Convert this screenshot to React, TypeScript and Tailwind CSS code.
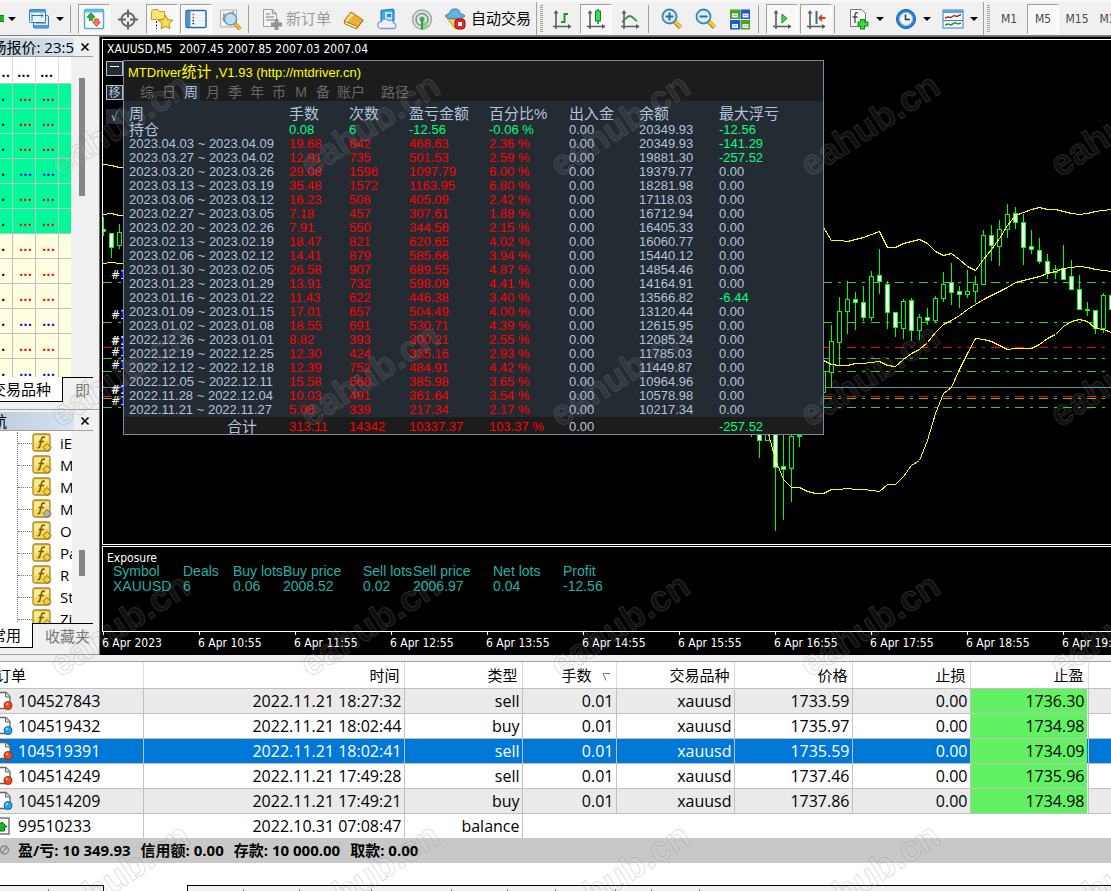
import { Fragment, type ReactNode } from "react"

type Candle = [x: number, high: number, low: number, top: number, bottom: number, up: boolean]

const candles: Candle[] = [
    [103, 217, 235, 229, 231, false],
    [111, 233, 257, 233, 247, false],
    [119, 224, 248, 232, 245, true],
    [751, 430, 436, 430, 434, false],
    [759, 430, 457, 430, 440, false],
    [767, 430, 440, 430, 440, true],
    [775, 430, 530, 430, 467, false],
    [783, 430, 519, 466, 469, false],
    [791, 430, 501, 436, 468, true],
    [799, 430, 446, 435, 435, true],
    [823, 371, 392, 371, 392, true],
    [831, 325, 387, 341, 372, true],
    [839, 297, 365, 311, 342, true],
    [847, 281, 333, 299, 311, true],
    [855, 292, 329, 299, 302, false],
    [863, 286, 320, 302, 317, false],
    [871, 271, 320, 276, 317, true],
    [879, 249, 293, 275, 281, false],
    [887, 281, 328, 284, 312, false],
    [895, 312, 336, 312, 327, false],
    [903, 299, 338, 301, 328, true],
    [911, 298, 340, 300, 330, false],
    [919, 314, 339, 317, 330, true],
    [927, 308, 324, 317, 320, false],
    [935, 296, 322, 298, 320, true],
    [943, 272, 301, 284, 298, true],
    [951, 263, 304, 282, 292, false],
    [959, 286, 307, 291, 294, false],
    [967, 270, 297, 291, 294, true],
    [975, 276, 302, 284, 291, true],
    [983, 230, 284, 235, 284, true],
    [991, 225, 260, 235, 245, false],
    [999, 220, 265, 229, 246, true],
    [1007, 204, 237, 214, 229, true],
    [1015, 207, 228, 213, 222, false],
    [1023, 214, 264, 222, 247, false],
    [1031, 230, 253, 246, 249, false],
    [1039, 238, 263, 250, 261, false],
    [1047, 254, 278, 261, 273, false],
    [1055, 265, 278, 269, 272, true],
    [1063, 245, 279, 268, 279, false],
    [1071, 260, 289, 276, 289, false],
    [1079, 275, 309, 289, 309, false],
    [1087, 302, 315, 309, 310, false],
    [1095, 310, 333, 310, 328, false],
    [1103, 293, 332, 295, 328, true],
    [1111, 295, 309, 295, 309, false],
]

const bands = [
    { start: 823, ys: [227, 240, 240, 241, 239, 237, 234, 231, 247, 247, 243, 241, 239, 243, 251, 255, 253, 259, 266, 270, 259, 249, 238, 225, 215, 212, 209, 207, 209, 209, 211, 213, 214, 213, 211, 210, 209] },
    { start: 823, ys: [360, 364, 365, 365, 363, 363, 362, 361, 365, 366, 359, 353, 349, 342, 332, 324, 320, 315, 309, 304, 299, 295, 291, 287, 282, 280, 278, 276, 273, 271, 268, 267, 266, 267, 269, 270, 271] },
    { start: 767, ys: [430, 459, 479, 487, 487, 491, 493, 493, 489, 489, 488, 489, 489, 490, 491, 484, 484, 476, 465, 460, 440, 413, 393, 387, 369, 353, 338, 339, 341, 345, 349, 348, 348, 348, 344, 338, 334, 326, 321, 319, 321, 328, 329, 332] },
    { start: 103, ys: [164, 165, 167, 167] },
    { start: 103, ys: [214, 213, 215, 215] },
    { start: 103, ys: [263, 262, 263, 263] },
]

const orderLines = [
    { y: 282, color: "#32cd32" },
    { y: 322, color: "#32cd32" },
    { y: 347, color: "#ff0000" },
    { y: 358, color: "#32cd32" },
    { y: 371, color: "#32cd32" },
    { y: 396, color: "#ff0000" },
    { y: 398, color: "#32cd32" },
    { y: 407, color: "#32cd32" },
]

const statRows = [
    ["2023.04.03 ~ 2023.04.09", "19.68", "642", "468.63", "2.36 %", "20349.93", "-141.29"],
    ["2023.03.27 ~ 2023.04.02", "12.91", "735", "501.53", "2.59 %", "19881.30", "-257.52"],
    ["2023.03.20 ~ 2023.03.26", "29.08", "1596", "1097.79", "6.00 %", "19379.77", "0.00"],
    ["2023.03.13 ~ 2023.03.19", "35.48", "1572", "1163.95", "6.80 %", "18281.98", "0.00"],
    ["2023.03.06 ~ 2023.03.12", "16.23", "508", "405.09", "2.42 %", "17118.03", "0.00"],
    ["2023.02.27 ~ 2023.03.05", "7.18", "457", "307.61", "1.88 %", "16712.94", "0.00"],
    ["2023.02.20 ~ 2023.02.26", "7.91", "550", "344.56", "2.15 %", "16405.33", "0.00"],
    ["2023.02.13 ~ 2023.02.19", "18.47", "821", "620.65", "4.02 %", "16060.77", "0.00"],
    ["2023.02.06 ~ 2023.02.12", "14.41", "879", "585.66", "3.94 %", "15440.12", "0.00"],
    ["2023.01.30 ~ 2023.02.05", "26.58", "907", "689.55", "4.87 %", "14854.46", "0.00"],
    ["2023.01.23 ~ 2023.01.29", "13.91", "732", "598.09", "4.41 %", "14164.91", "0.00"],
    ["2023.01.16 ~ 2023.01.22", "11.43", "622", "446.38", "3.40 %", "13566.82", "-6.44"],
    ["2023.01.09 ~ 2023.01.15", "17.01", "657", "504.49", "4.00 %", "13120.44", "0.00"],
    ["2023.01.02 ~ 2023.01.08", "18.55", "691", "530.71", "4.39 %", "12615.95", "0.00"],
    ["2022.12.26 ~ 2023.01.01", "8.82", "393", "300.21", "2.55 %", "12085.24", "0.00"],
    ["2022.12.19 ~ 2022.12.25", "12.30", "424", "335.16", "2.93 %", "11785.03", "0.00"],
    ["2022.12.12 ~ 2022.12.18", "12.39", "752", "484.91", "4.42 %", "11449.87", "0.00"],
    ["2022.12.05 ~ 2022.12.11", "15.58", "568", "385.98", "3.65 %", "10964.96", "0.00"],
    ["2022.11.28 ~ 2022.12.04", "10.03", "491", "361.64", "3.54 %", "10578.98", "0.00"],
    ["2022.11.21 ~ 2022.11.27", "5.08", "339", "217.34", "2.17 %", "10217.34", "0.00"],
]

const exposure = [
    ["Symbol", "XAUUSD", "w-[70px]"],
    ["Deals", "6", "w-[50px]"],
    ["Buy lots", "0.06", "w-[50px]"],
    ["Buy price", "2008.52", "w-[80px]"],
    ["Sell lots", "0.02", "w-[50px]"],
    ["Sell price", "2006.97", "w-[80px]"],
    ["Net lots", "0.04", "w-[70px]"],
    ["Profit", "-12.56", "w-[70px]"],
]

const timeLabels = ["6 Apr 2023", "6 Apr 10:55", "6 Apr 11:55", "6 Apr 12:55", "6 Apr 13:55", "6 Apr 14:55", "6 Apr 15:55", "6 Apr 16:55", "6 Apr 17:55", "6 Apr 18:55", "6 Apr 19:55"]

const orders = [
    { id: "104527843", time: "2022.11.21 18:27:32", type: "sell", price: "1733.59", tp: "1736.30" },
    { id: "104519432", time: "2022.11.21 18:02:44", type: "buy", price: "1735.97", tp: "1734.98" },
    { id: "104519391", time: "2022.11.21 18:02:41", type: "sell", price: "1735.59", tp: "1734.09", selected: true },
    { id: "104514249", time: "2022.11.21 17:49:28", type: "sell", price: "1737.46", tp: "1735.96" },
    { id: "104514209", time: "2022.11.21 17:49:21", type: "buy", price: "1737.86", tp: "1734.98" },
]

const quoteColors = ["red", "red", "red", "blue", "red", "red", "red", "red", "red", "blue", "red", "blue"]
const navItems = ["iE", "M", "M", "M", "O", "Pa", "R", "St", "Zi"]

/* ---------- toolbar ---------- */

function Icon({ children }: { children: ReactNode }) {
    return (
        <svg viewBox="0 0 22 22" className="h-[22px] w-[22px] shrink-0" fill="none">
            {children}
        </svg>
    )
}

function Axes() {
    return (
        <>
            <path d="M5 3v18M2 18.500h18" stroke="#5c5c5c" strokeWidth="1.600" />
            <path d="M2.500 5.500 5 2l2.500 3.500zM17 16l3.500 2.500L17 21z" fill="#5c5c5c" />
        </>
    )
}

function ToolButton({ label, children, pressed, className = "w-8 justify-center" }: { label: string; children: ReactNode; pressed?: boolean; className?: string }) {
    const look = pressed
        ? "border-t-[#a0a0a0] border-l-[#a0a0a0] border-r-white border-b-white bg-[#f8f8f8]"
        : "border-transparent"
    return (
        <button type="button" aria-label={label} className={`flex h-[30px] shrink-0 items-center border ${look} ${className}`}>
            {children}
        </button>
    )
}

function Caret() {
    return <span className="ml-1.5 border-x-4 border-t-4 border-x-transparent border-t-black" />
}

function Sep() {
    return <span className="h-7 w-1.5 shrink-0 border-l border-[#a0a0a0]" />
}

function Grip() {
    return (
        <span className="flex h-[34px] w-2 shrink-0 items-center border-l border-[#a0a0a0] pl-[3px]">
            <span className="h-7 w-[3px] bg-[repeating-linear-gradient(#a0a0a0_0_1px,transparent_1px_2px)]" />
        </span>
    )
}

function Magnifier({ plus }: { plus?: boolean }) {
    return (
        <Icon>
            <path d="m13.500 13.500 6 6" stroke="#b8860b" strokeWidth="4.500" />
            <path d="m13.500 13 6 6" stroke="#f6cf3c" strokeWidth="2.500" />
            <circle cx="8.500" cy="8.500" r="7" fill="#d9f0ff" stroke="#3f84b8" strokeWidth="1.800" />
            <path d={plus ? "M4.500 8.500h8M8.500 4.500v8" : "M4.500 8.500h8"} stroke="#2d6d96" strokeWidth="2" />
        </Icon>
    )
}

function Toolbar() {
    return (
        <div className="flex h-9 items-center gap-0.5 overflow-hidden border-b border-[#808080] bg-[#f0f0f0] pt-0.5 shadow-[inset_0_2px_0_#f8f8f8,inset_0_1px_0_#a0a0a0]">
            <button type="button" aria-label="New chart" className="flex h-[30px] w-5 shrink-0 items-center">
                <span className="h-[7px] w-1 border-y border-[#167c16] bg-[#22b522]" />
                <span className="ml-1 border-x-4 border-t-4 border-x-transparent border-t-black" />
            </button>
            <ToolButton label="Profiles" className="w-[46px] pl-[5px]">
                <Icon>
                    <rect x="5.500" y="7.500" width="15" height="12.500" rx="1" fill="#d8ecfb" stroke="#2f7bbd" />
                    <path d="M5.500 17h15v3h-15z" fill="#4c9ad6" />
                    <rect x="1.500" y="1.500" width="16" height="13" rx="1" fill="#e8f5fe" stroke="#2f7bbd" />
                    <path d="M1.500 1.500h16v3h-16z" fill="#4c9ad6" />
                    <path d="M4 6v7m0-5.500h11m-2-2 2 2-2 2M8 15h10" stroke="#44708f" />
                </Icon>
                <Caret />
            </ToolButton>
            <Sep />
            <ToolButton label="Market Watch" pressed>
                <Icon>
                    <rect x="1.500" y="1.500" width="19" height="19" rx="1" fill="#fff" stroke="#5aa6e0" strokeWidth="1.500" />
                    <path d="M1.500 1.500h19v3h-19z" fill="#6db6ea" />
                    <path d="m8 4.800 4 4.500H9.800v3H6.200v-3H4z" fill="#27b327" stroke="#118011" strokeWidth=".8" />
                    <path d="m13.500 18.500-4-4.500h2.200v-3h3.600v3h2.200z" fill="#ff7a45" stroke="#d2350b" strokeWidth=".8" />
                </Icon>
            </ToolButton>
            <ToolButton label="Crosshair">
                <Icon>
                    <circle cx="11" cy="11.500" r="6.500" stroke="#666" strokeWidth="2" />
                    <path d="M11 1.500v8M11 13.500v8M1 11.500h8M13 11.500h8" stroke="#666" strokeWidth="2" />
                </Icon>
            </ToolButton>
            <ToolButton label="Navigator" pressed>
                <Icon>
                    <path d="M.5 3.500 2 1.500h5l1.500 2h5v8H.5z" fill="#fbe377" stroke="#c99a1f" />
                    <path d="M5.500 13v8" stroke="#222" strokeDasharray="2 1.500" />
                    <path d="m14.500 7 2.200 4.600 5 .6-3.700 3.500 1 5-4.500-2.500-4.500 2.500 1-5-3.700-3.500 5-.6z" fill="#ffd94f" stroke="#b98a18" />
                </Icon>
            </ToolButton>
            <ToolButton label="Terminal" pressed>
                <Icon>
                    <rect x="1" y="2.500" width="20" height="17" rx="1.500" fill="#fff" stroke="#2468a8" strokeWidth="1.500" />
                    <path d="M1.500 3h4v16h-4z" fill="#4a92d2" />
                    <path d="M9 7h11M9 10h11M9 13h11M9 16h11" stroke="#d5e1ea" />
                    <path d="M7.500 6.500h1.500M7.500 9.500h1.500" stroke="#e02020" strokeWidth="1.500" />
                    <path d="M7.500 12.500h1.500M7.500 15.500h1.500" stroke="#222" strokeWidth="1.500" />
                </Icon>
            </ToolButton>
            <ToolButton label="Strategy Tester">
                <Icon>
                    <path d="M1.500 2h16v17h-16z" fill="#f6f1e4" stroke="#b5b5a8" />
                    <path d="M5 5v9M14 3v5M4 8h3M3 11h2" stroke="#777" />
                    <path d="m15.500 15 5.500 6" stroke="#b8860b" strokeWidth="4" />
                    <path d="m15.500 15 5.500 6" stroke="#f2c53c" strokeWidth="2" />
                    <circle cx="11.500" cy="11" r="6" fill="#bfdcf2" fillOpacity=".9" stroke="#5c9ccb" strokeWidth="1.500" />
                </Icon>
            </ToolButton>
            <Sep />
            <ToolButton label="新订单" className="w-20 gap-[3px] pl-1">
                <Icon>
                    <path d="M2.500 1.500h9l4 4v13h-13z" fill="#f5f5f5" stroke="#a0a0a0" />
                    <path d="M11.500 1.500v4h4M5 6h4M5 9h8M5 12h8" stroke="#a0a0a0" strokeWidth="1.500" />
                    <path d="M15.500 11v11M10 16.500h11" stroke="#929292" strokeWidth="4" />
                </Icon>
                <span className="text-[15px] whitespace-nowrap text-[#9a9a9a]">新订单</span>
            </ToolButton>
            <ToolButton label="MetaEditor">
                <Icon>
                    <path d="m1 13 7-9 12 8-6 8z" fill="#e9b23a" stroke="#a66f10" />
                    <path d="m1 13 1 3 12 5 .3-2.500z" fill="#fff3c9" stroke="#a66f10" />
                    <path d="M14 20.500 20.500 13v-1.500L14 19z" fill="#b87a12" />
                    <path d="m8 5 3 2-7 7-2-1z" fill="#ffdf86" />
                </Icon>
            </ToolButton>
            <ToolButton label="Cloud">
                <Icon>
                    <path d="M4 2.500 16 1l1 1v11H4z" fill="#38a8ef" stroke="#1673b5" />
                    <path d="M8 4h7v8H8z" fill="#b8e5ff" />
                    <path d="M10 6h4v3h-4z" fill="#238fd6" />
                    <path d="M4 20.500a3.500 3.500 0 0 1 .5-7 4 4 0 0 1 7-1 3.500 3.500 0 0 1 5 2.500 3 3 0 0 1 1 5.500z" fill="#eaf1fa" stroke="#7f9cc4" strokeWidth="1.300" />
                </Icon>
            </ToolButton>
            <ToolButton label="Signals">
                <Icon>
                    <circle cx="11" cy="11.500" r="9.500" fill="#dfe3e1" stroke="#a3aaa7" strokeWidth="1.500" />
                    <circle cx="11" cy="11.500" r="6" stroke="#7f9185" strokeWidth="1.500" />
                    <circle cx="11" cy="11" r="2.500" fill="#4bae4e" />
                    <path d="M11 11v10.500a9 9 0 0 0 7-3z" fill="#7fd486" fillOpacity=".8" />
                    <path d="M11 11v10.500" stroke="#2f9e3c" strokeWidth="2" />
                </Icon>
            </ToolButton>
            <ToolButton label="自动交易" className="w-[94px] gap-[5px] pl-[3px]">
                <Icon>
                    <path d="M3 10h16l-5 9-3 1.500z" fill="#f5cf4a" stroke="#c29521" />
                    <path d="M1 8c2-2 3-2 4-2 1-4 3-5 6-5s5 1 5 5c2 0 3 0 5 2-4 4-16 4-20 0" fill="#62b2e2" stroke="#2f7fb4" />
                    <rect x="11" y="11" width="10" height="10" rx="3" fill="#e12b1d" stroke="#a80f08" />
                    <path d="M14 14h4v4h-4z" fill="#fff" />
                </Icon>
                <span className="text-[15px] whitespace-nowrap text-black">自动交易</span>
            </ToolButton>
            <Grip />
            <ToolButton label="Bar chart">
                <Icon><Axes /><path d="M13.500 5v10M13.500 6H17M10 14h3.500" stroke="#169b29" strokeWidth="2" /></Icon>
            </ToolButton>
            <ToolButton label="Candlesticks" pressed>
                <Icon><Axes /><path d="M13 1v15" stroke="#148420" strokeWidth="1.500" /><rect x="10.500" y="3" width="5" height="10" fill="#41dc50" stroke="#148420" /></Icon>
            </ToolButton>
            <ToolButton label="Line chart">
                <Icon><Axes /><path d="M3 14c4-3 5-6 8-6s4 4 7 5" stroke="#3b8c47" strokeWidth="1.800" /></Icon>
            </ToolButton>
            <Sep />
            <ToolButton label="Zoom in"><Magnifier plus /></ToolButton>
            <ToolButton label="Zoom out"><Magnifier /></ToolButton>
            <ToolButton label="Tile windows">
                <Icon>
                    <path d="M1 1.500h10v9.500H1zM11.500 12h9.500v9.500h-9.500z" fill="#4fa512" />
                    <path d="M11.500 1.500H21V11h-9.500zM1 12h10v9.500H1z" fill="#2159d2" />
                    <path d="M3 5.500h6v4H3zM13.500 5.500h6v4h-6zM3 16h6v4H3zM13.500 16h6v4h-6z" fill="#eef4fb" />
                    <path d="M4 7.500h4M14.500 7.500h4M4 18h4M14.500 18h4" stroke="#88aadd" />
                </Icon>
            </ToolButton>
            <Sep />
            <ToolButton label="Auto scroll" pressed>
                <Icon><Axes /><path d="m11 6 5 4.500-5 4.500z" fill="#45d955" stroke="#148420" /></Icon>
            </ToolButton>
            <ToolButton label="Chart shift" pressed>
                <Icon><Axes /><path d="M11.500 3v13" stroke="#1e73a8" strokeWidth="2" /><path d="m13 10 4-4v3h3.500v2H17v3z" fill="#d0421b" /></Icon>
            </ToolButton>
            <Sep />
            <ToolButton label="Indicators" className="w-[45px] pl-[5px]">
                <Icon>
                    <path d="M2.500 1.500h11l4 4v13h-15z" fill="#fafafa" stroke="#777" />
                    <path d="M10 5c-3-1-3 1-3 3v7M4.500 9h5" stroke="#444" strokeWidth="1.300" />
                    <path d="M14.500 11v10.500M9.500 16h11" stroke="#168e18" strokeWidth="5" />
                    <path d="M14.500 12v8.500M10.500 16h9" stroke="#3ad63d" strokeWidth="3" />
                </Icon>
                <Caret />
            </ToolButton>
            <ToolButton label="Periods" className="w-[45px] pl-[5px]">
                <Icon>
                    <circle cx="11" cy="11" r="9.500" fill="#2783dd" stroke="#1558a6" />
                    <circle cx="11" cy="11" r="6.500" fill="#eef6fd" stroke="#9dc4e8" />
                    <path d="M10.500 6.500v5H15" stroke="#333" strokeWidth="1.500" />
                </Icon>
                <Caret />
            </ToolButton>
            <ToolButton label="Templates" className="w-[45px] pl-[5px]">
                <Icon>
                    <rect x="1" y="2" width="20" height="18" fill="#f4fafe" stroke="#3a7fbd" />
                    <path d="M1 2h20v3H1z" fill="#5ba4dd" />
                    <path d="M1 12.500h20" stroke="#3a7fbd" />
                    <path d="m3 10 3-1 3 .5 3-2 3 1 4-2" stroke="#a83324" strokeWidth="1.500" />
                    <path d="m3 17 3-1 3 1 4-2.500 3 1.500 3-1" stroke="#2c9140" strokeWidth="1.500" />
                </Icon>
                <Caret />
            </ToolButton>
            <Grip />
            {["M1", "M5", "M15", "M30"].map((tf) => (
                <ToolButton key={tf} label={tf} pressed={tf === "M5"}>
                    <span className="font-['DejaVu_Sans_Condensed','Noto_Sans',sans-serif] text-xs text-[#4a4a4a]">{tf}</span>
                </ToolButton>
            ))}
        </div>
    )
}

/* ---------- left side ---------- */

function PanelHeader({ title, pad = "" }: { title: string; pad?: string }) {
    return (
        <div className="mr-1.5 flex h-[19px] items-center border-b border-[#a0a0a0]">
            <div className={`flex h-[18px] w-[74px] justify-end overflow-hidden bg-linear-to-r from-[#bfcddb] to-[#d7e4f2] ${pad}`}>
                <h2 className="shrink-0 text-[15px] leading-[18px] whitespace-nowrap">{title}</h2>
            </div>
            <button type="button" aria-label="Close" className="ml-1.5">
                <svg viewBox="0 0 10 10" className="h-2.5 w-2.5"><path d="m1.500 1.500 7 7m0-7-7 7" stroke="#000" strokeWidth="1.600" /></svg>
            </button>
        </div>
    )
}

function PanelTabs({ active, other, width }: { active: string; other: string; width: string }) {
    return (
        <div className="mr-1.5 flex h-[25px] overflow-hidden text-[15px] leading-6">
            <button type="button" className={`flex shrink-0 justify-end overflow-hidden border-r border-b border-black bg-white pr-[11px] whitespace-nowrap ${width}`}>
                <span className="shrink-0">{active}</span>
            </button>
            <button type="button" className="flex-1 overflow-hidden border-t border-black pl-3 text-left whitespace-nowrap text-[#777]">{other}</button>
        </div>
    )
}

function MarketWatch() {
    return (
        <section>
            <PanelHeader title="场报价: 23:5" />
            <div className="mr-1.5 flex h-80 overflow-hidden">
                <div className="w-[71px] overflow-hidden bg-white">
                    <table className="w-[71px] table-fixed border-collapse text-base leading-4 font-semibold">
                        <thead>
                            <tr className="h-[26px] align-bottom">
                                <th className="w-3 border-r border-[#dcdcdc] pb-1 font-semibold">..</th>
                                <th className="w-[23px] border-r border-[#dcdcdc] pb-1 font-semibold">...</th>
                                <th className="w-[23px] border-r border-[#dcdcdc] pb-1 font-semibold">...</th>
                                <th className="w-[13px]" />
                            </tr>
                        </thead>
                        <tbody>
                            {quoteColors.map((color, i) => (
                                <tr key={i} className={`h-[25px] text-center align-bottom ${i < 6 ? "bg-[#00fa9a]" : "bg-[#ffffe0]"}`}>
                                    <td className="border border-l-0 border-[#c0c0c0] pb-[5px] pl-px text-left">.</td>
                                    <td className={`border border-[#c0c0c0] pb-[5px] pl-1 ${color === "red" ? "text-[#f00]" : "text-[#00f]"}`}>...</td>
                                    <td className={`border border-[#c0c0c0] pb-[5px] pl-1 ${color === "red" ? "text-[#f00]" : "text-[#00f]"}`}>...</td>
                                    <td className="border border-r-0 border-[#c0c0c0]" />
                                </tr>
                            ))}
                        </tbody>
                    </table>
                </div>
                <div className="flex-1 pt-[21px] pl-2">
                    <div className="h-[118px] w-1.5 bg-[#858585]" />
                </div>
            </div>
            <PanelTabs active="交易品种" other="即" width="w-[63px]" />
        </section>
    )
}

function IndicatorIcon({ gray }: { gray?: boolean }) {
    return (
        <svg viewBox="0 0 20 20" className="h-5 w-5 shrink-0">
            <rect x="1" y="1" width="17" height="17" rx="2" fill="#f7db58" stroke="#a8852a" strokeWidth="1.300" />
            <path d="M2.500 3h14v5q-7-1-14 3z" fill="#fdeb93" />
            <path d="M13 4.500c-3-1.500-3.500 1-4 4l-1 4c-.4 1.800-1 2.500-2.500 2M6.500 8.500H12" fill="none" stroke="#7b5a16" strokeWidth="1.600" />
            <path d="m15 10.500 4 4-4 4-4-4z" fill={gray ? "#b5b5b5" : "#f3cf42"} stroke={gray ? "#666" : "#8d6a14"} />
        </svg>
    )
}

function Navigator() {
    return (
        <section>
            <PanelHeader title="航" pad="pr-[67px]" />
            <div className="mr-1.5 flex h-48 overflow-hidden">
                <div className="w-[72px] overflow-hidden bg-white pt-px pl-[17px]">
                    <ul className="border-l border-dotted border-[#777]">
                        {navItems.map((name, i) => (
                            <li key={i} className="flex h-[22px] items-center text-[15px] whitespace-nowrap">
                                <span className="w-3.5 shrink-0 border-t border-dotted border-[#777]" />
                                <IndicatorIcon gray={i === 3} />
                                <span className="pl-2">{name}</span>
                            </li>
                        ))}
                    </ul>
                </div>
                <div className="flex-1 pt-[119px] pl-[7px]">
                    <div className="h-[26px] w-1.5 bg-[#858585]" />
                </div>
            </div>
            <PanelTabs active="常用" other="收藏夹" width="w-[33px]" />
        </section>
    )
}

/* ---------- chart ---------- */

function PriceChart() {
    return (
        <svg viewBox="103 40 1008 504" preserveAspectRatio="xMinYMin slice" className="h-full w-full" shapeRendering="crispEdges" fill="none">
            {orderLines.map((line) => (
                <path key={line.y} d={`M103 ${line.y + 0.5}H1111`} stroke={line.color} strokeDasharray="9 6 3 6" />
            ))}
            <path d="M103 387.500H1111" stroke="#778899" />
            {candles.map(([x, high, low, top, bottom, up]) => (
                <Fragment key={x}>
                    <path d={`M${x + 0.5} ${high}V${low + 1}`} stroke="#00ff00" />
                    <rect x={x - 1.5} y={top + 0.5} width="4" height={Math.max(bottom - top, 1)} fill={up ? "#000" : "#fff"} stroke="#00ff00" />
                </Fragment>
            ))}
            {bands.map((band, i) => (
                <polyline key={i} points={band.ys.map((y, n) => `${band.start + n * 8 + 0.5},${y + 0.5}`).join(" ")} stroke="#ffff00" />
            ))}
            <g fill="#fff" fontSize="12" fontFamily="'DejaVu Sans Condensed','Noto Sans',sans-serif">
                {[275, 315, 341, 352, 365, 390, 401].map((y) => (
                    <Fragment key={y}>
                        <rect x="121" y={y - 5} width="2" height="9" fill="#0000c8" />
                        <text x="111" y={y + 4} fontWeight={y === 341 || y === 390 ? "bold" : "normal"}>#1</text>
                    </Fragment>
                ))}
            </g>
        </svg>
    )
}

function StatsTabs() {
    const tabs = ["综", "日", "周", "月", "季", "年", "币", "M", "备"]
    return (
        <div className="flex h-[18px] pl-3 text-sm leading-[18px] text-[#686868]">
            {tabs.map((tab) => (
                <button key={tab} type="button" className={`mx-0.5 w-[18px] ${tab === "周" ? "bg-[#252b33] text-[#b0c4de]" : ""}`}>{tab}</button>
            ))}
            <button type="button" className="ml-0.5 w-[30px]">账户</button>
            <button type="button" className="ml-3.5 w-[30px]">路径</button>
        </div>
    )
}

function StatsPanel() {
    const widths = [165, 60, 60, 80, 80, 70, 80, 104]
    return (
        <div className="absolute top-[20px] left-[20px] border border-[#7a88a3] bg-[#1c1c1c] font-['Liberation_Sans','Noto_Sans_CJK_SC',sans-serif] text-[13px] text-[#b0c4de]">
            <h1 className="h-[22px] pl-1 leading-[22px] text-[#ff0]">
                MTDriver<span className="text-[15px]">统计</span> ,V1.93 (http://mtdriver.cn)
            </h1>
            <StatsTabs />
            <table className="w-[699px] table-fixed leading-[14px]">
                <colgroup>
                    {widths.map((w, i) => <col key={i} style={{ width: w }} />)}
                </colgroup>
                <thead className="bg-[#252b33] text-left text-[15px]">
                    <tr className="h-[22px] align-middle">
                        {["周", "手数", "次数", "盈亏金额", "百分比%", "出入金", "余额", "最大浮亏"].map((h, i) => (
                            <th key={h} className={`pt-1 font-normal ${i === 0 ? "pl-[5px]" : ""}`}>{h}</th>
                        ))}
                    </tr>
                </thead>
                <tbody className="bg-[#252b33]">
                    <tr className="h-3.5 text-[#00ff7f]">
                        <td className="pl-[5px] text-[15px] text-[#b0c4de]">持仓</td>
                        <td>0.08</td>
                        <td>6</td>
                        <td>-12.56</td>
                        <td>-0.06 %</td>
                        <td className="text-[#b0c4de]">0.00</td>
                        <td className="text-[#b0c4de]">20349.93</td>
                        <td>-12.56</td>
                    </tr>
                    {statRows.map(([range, lots, count, profit, percent, balance, drawdown]) => (
                        <tr key={range} className="h-3.5">
                            <td className="pl-[5px]">{range}</td>
                            <td className="text-[#f00]">{lots}</td>
                            <td className="text-[#f00]">{count}</td>
                            <td className="text-[#f00]">{profit}</td>
                            <td className="text-[#f00]">{percent}</td>
                            <td>0.00</td>
                            <td>{balance}</td>
                            <td className={drawdown.startsWith("-") ? "text-[#00ff7f]" : ""}>{drawdown}</td>
                        </tr>
                    ))}
                </tbody>
                <tfoot>
                    <tr className="h-[17px] align-bottom text-[#f00]">
                        <td className="pr-8 text-right text-[15px] text-[#b0c4de]">合计</td>
                        <td>313.11</td>
                        <td>14342</td>
                        <td>10337.37</td>
                        <td>103.37 %</td>
                        <td className="text-[#b0c4de]">0.00</td>
                        <td />
                        <td className="text-[#00ff7f]">-257.52</td>
                    </tr>
                </tfoot>
            </table>
        </div>
    )
}

function ChartArea() {
    const small = "flex h-[15px] w-[17px] items-center justify-center overflow-hidden bg-[#252b33] text-xs leading-none text-[#b0c4de]"
    return (
        <main className="flex min-w-0 flex-1 flex-col border-t border-l border-[#696969] bg-black pt-0.5 pl-0.5 font-['DejaVu_Sans_Condensed','Noto_Sans','Noto_Sans_CJK_SC',sans-serif] text-xs text-white">
            <div className="relative min-h-0 flex-1 overflow-hidden border-y border-l border-white">
                <div className="absolute inset-0">
                    <PriceChart />
                </div>
                <p className="relative pl-1 leading-[19px] whitespace-pre">XAUUSD,M5  2007.45 2007.85 2007.03 2007.04</p>
                <div className="absolute top-[21px] left-[3px] flex flex-col gap-[9px]">
                    <button type="button" aria-label="Minimize" className={`${small} border border-[#b0c4de]`}>
                        <span className="mb-1 h-px w-[9px] bg-white" />
                    </button>
                    <button type="button" aria-label="Move" className={`${small} border border-[#b0c4de]`}>移</button>
                    <button type="button" aria-label="Confirm" className={small}>√</button>
                </div>
                <StatsPanel />
            </div>
            <section className="mt-px h-[86px] overflow-hidden border-y border-l border-white pt-[5px]">
                <h2 className="pl-1 leading-3">Exposure</h2>
                <div className="flex pl-2.5 font-['Liberation_Sans',sans-serif] text-sm leading-[15px] text-[#20b2aa]">
                    {exposure.map(([name, value, width]) => (
                        <dl key={name} className={`shrink-0 whitespace-nowrap ${width}`}>
                            <dt>{name}</dt>
                            <dd>{value}</dd>
                        </dl>
                    ))}
                </div>
            </section>
            <div className="flex h-[23px] overflow-hidden">
                {timeLabels.map((label) => (
                    <div key={label} className="w-24 shrink-0 whitespace-nowrap">
                        <div className="ml-px h-[3px] w-px bg-white" />
                        <span className="block leading-4">{label}</span>
                    </div>
                ))}
            </div>
        </main>
    )
}

/* ---------- orders ---------- */

function OrderIcon({ type }: { type: string }) {
    return (
        <svg viewBox="4 0 13 20" className="h-5 w-[13px] shrink-0">
            <path d="M0 1.500h10l4 4v12H0z" fill="#fff" stroke="#666" strokeWidth="1.300" />
            <path d="M9.500 1.500v4.500H14" fill="#ddd" stroke="#666" />
            <circle cx="12" cy="14.500" r="4" fill={type === "sell" ? "#ee4a1b" : "#2aa2ee"} stroke={type === "sell" ? "#a52a08" : "#1064a8"} />
            <circle cx="11" cy="13" r="1.300" fill="#fff" fillOpacity=".5" />
        </svg>
    )
}

function Orders() {
    const heads = ["时间", "类型", "手数", "交易品种", "价格", "止损", "止盈"]
    return (
        <section className="flex flex-1 flex-col border-t border-[#a0a0a0] bg-white">
            <table className="w-full table-fixed text-right text-base leading-6">
                <colgroup>
                    <col className="w-[143px]" />
                    <col className="w-[261px]" />
                    <col className="w-[118px]" />
                    <col className="w-[94px]" />
                    <col className="w-[118px]" />
                    <col className="w-[118px]" />
                    <col className="w-[118px]" />
                    <col className="w-[118px]" />
                    <col />
                </colgroup>
                <thead className="text-[15px]">
                    <tr className="h-[26px]">
                        <th className="border-r border-b border-[#dcdcdc] border-b-[#c0c0c0] text-left font-normal">
                            <span className="-ml-1">订单</span>
                        </th>
                        {heads.map((h) => (
                            <th key={h} className="border-r border-b border-[#dcdcdc] border-b-[#c0c0c0] pr-1 font-normal">
                                {h}
                                {h === "手数" && (
                                    <svg viewBox="0 0 8 8" className="mr-0.5 ml-2.5 inline h-2 w-2"><path d="M8 .5H1l3 7" fill="none" stroke="#777" /></svg>
                                )}
                            </th>
                        ))}
                        <th className="border-b border-[#c0c0c0]" />
                    </tr>
                </thead>
                <tbody>
                    {orders.map((order, i) => {
                        const cell = "border-r border-b border-[#c0c0c0] pr-0.5"
                        const row = order.selected ? "bg-[#0078d7] text-white" : i % 2 === 0 ? "bg-[#eaeaea]" : "bg-white"
                        return (
                            <tr key={order.id} className={`h-[25px] ${row}`}>
                                <td className="border-r border-b border-[#c0c0c0]">
                                    <div className="flex h-6 items-center gap-[5px]">
                                        <OrderIcon type={order.type} />
                                        <span>{order.id}</span>
                                    </div>
                                </td>
                                <td className={cell}>{order.time}</td>
                                <td className={cell}>{order.type}</td>
                                <td className={cell}>0.01</td>
                                <td className={cell}>xauusd</td>
                                <td className={cell}>{order.price}</td>
                                <td className={cell}>0.00</td>
                                <td className="border-r border-b border-[#c0c0c0] pr-px">
                                    <div className="h-6 bg-[#62f162] pr-0.5 text-black">{order.tp}</div>
                                </td>
                                <td className="border-b border-[#c0c0c0]" />
                            </tr>
                        )
                    })}
                    <tr className="h-6">
                        <td className="border-r border-[#c0c0c0]">
                            <div className="flex h-6 items-center gap-2">
                                <svg viewBox="0 0 10 18" className="h-[18px] w-2.5 shrink-0">
                                    <path d="M-4 1H9v16H-4z" fill="#fff" stroke="#777" strokeWidth="1.500" />
                                    <path d="m2 5 5 5H4.500v4H-.5v-4H-3z" fill="#17b51f" stroke="#0a6c10" />
                                </svg>
                                <span>99510233</span>
                            </div>
                        </td>
                        <td className="border-r border-[#c0c0c0] pr-0.5">2022.10.31 07:08:47</td>
                        <td className="border-r border-[#c0c0c0] pr-0.5">balance</td>
                        <td colSpan={6} />
                    </tr>
                </tbody>
            </table>
            <div className="flex h-[25px] items-center bg-[#c8c8c8] text-[15px] font-bold whitespace-pre">
                <svg viewBox="0 0 10 10" className="mr-2 h-2.5 w-2.5"><path d="M8.500 5a4 4 0 1 1-8 0 4 4 0 0 1 8 0M2 8l5-6" fill="none" stroke="#888" strokeWidth="1.300" /></svg>
                <p className="flex gap-2.5">
                    <span>盈/亏: 10 349.93</span>
                    <span>信用额: 0.00</span>
                    <span>存款: 10 000.00</span>
                    <span>取款: 0.00</span>
                </p>
            </div>
            <div className="mt-auto flex h-1.5">
                <div className="flex w-[104px] items-end border-t border-r border-black bg-[#f0f0f0]">
                    <span className="ml-12 h-0.5 w-px bg-[#777]" />
                </div>
                <div className="ml-[83px] flex flex-1 items-end border-t border-l border-black bg-[#f0f0f0]">
                    {["w-14", "w-14", "w-[72px]", "w-20", "w-14", "w-12", "w-[60px]", "w-9", "w-12"].map((w, i) => (
                        <span key={i} className={`h-0.5 border-r border-[#777] ${w}`} />
                    ))}
                </div>
            </div>
        </section>
    )
}

function Watermark() {
    return (
        <svg className="pointer-events-none absolute inset-0 h-full w-full" fontFamily="'Liberation Sans',sans-serif" fontSize="36" fontWeight="bold" fill="#ffffff" fillOpacity=".06" stroke="#888888" strokeOpacity=".28" strokeWidth="1">
            {[178, 428, 678, 928].map((y) =>
                [-190, 60, 310, 560, 810, 1060].map((x) => (
                    <text key={`${x}-${y}`} transform={`translate(${x} ${y}) rotate(-33)`}>eahub.cn</text>
                ))
            )}
        </svg>
    )
}

export default function App() {
    return (
        <div className="relative flex min-h-screen flex-col overflow-hidden bg-[#f0f0f0] font-['Open_Sans','Noto_Sans_CJK_SC',sans-serif] text-black">
            <Toolbar />
            <div className="flex">
                <aside className="w-[99px] shrink-0 overflow-hidden border-b border-[#a0a0a0] pt-0.5 pb-1.5">
                    <MarketWatch />
                    <div className="mt-[7px] mb-0.5 h-px bg-[#a0a0a0]" />
                    <Navigator />
                </aside>
                <ChartArea />
            </div>
            <div className="h-1.5" />
            <Orders />
            <Watermark />
        </div>
    )
}
